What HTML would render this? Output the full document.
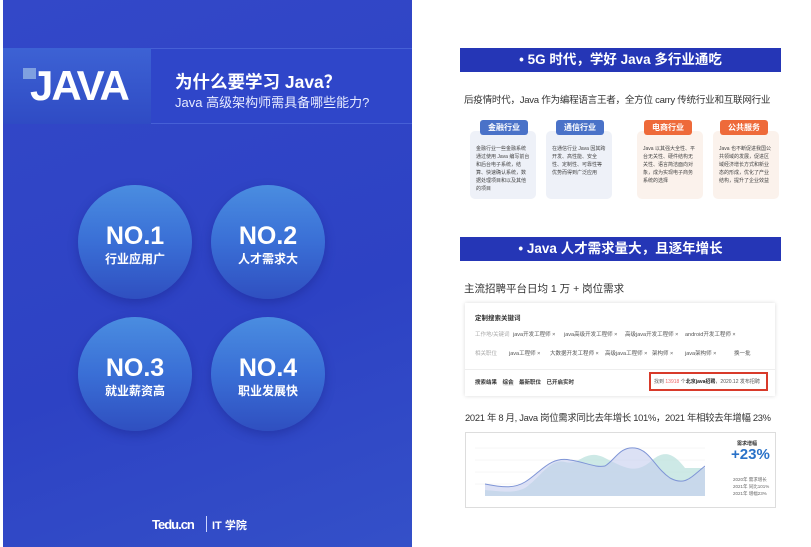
<!DOCTYPE html>
<html><head><meta charset="utf-8"><style>
*{margin:0;padding:0;box-sizing:border-box}
body{width:811px;height:547px;background:#fff;position:relative;overflow:hidden;font-family:"Liberation Sans","Noto Sans CJK SC",sans-serif}
.a{position:absolute;white-space:nowrap}
.left{left:3px;top:0;width:409px;height:547px;background:linear-gradient(160deg,#3348c8 0%,#2d42c4 60%,#3450c8 100%)}
.circ{position:absolute;width:114px;height:114px;border-radius:50%;background:linear-gradient(180deg,#4a8de0 0%,#3a6fd6 50%,#2f4fc0 100%);box-shadow:0 4px 10px rgba(20,30,120,.35);color:#fff;text-align:center}
.circ b{display:block;font-size:25px;margin-top:38px;line-height:26px;font-weight:bold}
.circ span{display:block;font-size:12px;font-weight:bold;margin-top:1px}
.ban{left:460px;width:321px;height:24px;background:#2536b6;color:#fff;font-weight:bold;font-size:13.5px;text-align:center;line-height:24px}
.t{font-size:10.5px;color:#333}
.lab{position:absolute;width:48px;height:15px;border-radius:3px;color:#fff;font-size:8px;font-weight:bold;text-align:center;line-height:15px}
.card{position:absolute;width:66px;height:68px;border-radius:5px;font-size:5px;line-height:8px;color:#444;padding:14px 6px 0}
.tag{position:absolute;font-size:5.5px;color:#555;white-space:nowrap}
</style></head><body>
<div class="a left"></div>
<div class="a" style="left:3px;top:48px;width:409px;height:76px;background:#2f46c9;border-top:1px solid #4660d6;border-bottom:1px solid #4660d6"></div>
<div class="a" style="left:3px;top:48px;width:148px;height:76px;background:linear-gradient(180deg,#3d62d4,#2f4bc4)"></div>
<div class="a" style="left:23px;top:68px;width:13px;height:11px;background:#7fa0e0"></div>
<div class="a" style="left:30px;top:62px;color:#fff;font-size:42px;font-weight:bold;letter-spacing:-2px">JAVA</div>
<div class="a" style="left:175px;top:69px;color:#fff;font-size:17.5px;font-weight:bold">为什么要学习 Java？</div>
<div class="a" style="left:175px;top:92px;color:#e8ecff;font-size:13px">Java 高级架构师需具备哪些能力?</div>
<div class="circ" style="left:78px;top:185px"><b>NO.1</b><span>行业应用广</span></div>
<div class="circ" style="left:211px;top:185px"><b>NO.2</b><span>人才需求大</span></div>
<div class="circ" style="left:78px;top:317px"><b>NO.3</b><span>就业薪资高</span></div>
<div class="circ" style="left:211px;top:317px"><b>NO.4</b><span>职业发展快</span></div>
<div class="a" style="left:152px;top:517px;color:#fff;font-size:13px;font-weight:bold;letter-spacing:-1px">Tedu.cn</div>
<div class="a" style="left:206px;top:516px;width:1px;height:16px;background:#cdd5ff"></div>
<div class="a" style="left:212px;top:517px;color:#fff;font-size:11px;font-weight:bold">IT 学院</div>

<div class="a ban" style="top:48px">• 5G 时代，学好 Java 多行业通吃</div>
<div class="a t" style="left:464px;top:92px;font-size:9.6px;letter-spacing:-.3px">后疫情时代，Java 作为编程语言王者，全方位 carry 传统行业和互联网行业</div>
<div class="card" style="left:470px;top:131px;background:#eef1f8">金融行业一些金融系统通过使用 Java 编写前台和后台电子系统，结算、快速确认系统，数据处理项目和以及其他的项目</div>
<div class="card" style="left:546px;top:131px;background:#eef1f8">在通信行业 Java 因其跨开发、高性能、安全性、定制性、可靠性等优势而得到广泛应用</div>
<div class="card" style="left:637px;top:131px;background:#fbf2ec">Java 以其强大全性、平台无关性、硬件结构无关性、语言简洁面向对象，成为实现电子商务系统的选择</div>
<div class="card" style="left:713px;top:131px;background:#fbf2ec">Java 也不断促进我国公共领域的发展，促进区域经济增长方式和新业态的形成，优化了产业结构，提升了企业效益</div>
<div class="lab" style="left:480px;top:120px;background:#4a72c8">金融行业</div>
<div class="lab" style="left:556px;top:120px;background:#4a72c8">通信行业</div>
<div class="lab" style="left:644px;top:120px;background:#ee6a3a">电商行业</div>
<div class="lab" style="left:720px;top:120px;background:#ee6a3a">公共服务</div>

<div class="a ban" style="top:237px">• Java 人才需求量大，且逐年增长</div>
<div class="a t" style="left:464px;top:281px">主流招聘平台日均 1 万 + 岗位需求</div>
<div class="a" style="left:465px;top:303px;width:310px;height:93px;background:#fff;box-shadow:0 0 4px rgba(0,0,0,.15)"></div>
<div class="a" style="left:475px;top:312px;font-size:6.5px;font-weight:bold;color:#333">定制搜索关键词</div>
<div class="tag" style="left:475px;top:330px;color:#aaa">工作地/关键词</div>
<div class="tag" style="left:513px;top:330px">java开发工程师 ×</div>
<div class="tag" style="left:564px;top:330px">java高级开发工程师 ×</div>
<div class="tag" style="left:625px;top:330px">高级java开发工程师 ×</div>
<div class="tag" style="left:685px;top:330px">android开发工程师 ×</div>
<div class="tag" style="left:475px;top:349px;color:#aaa">相关职位</div>
<div class="tag" style="left:509px;top:349px">java工程师 ×</div>
<div class="tag" style="left:550px;top:349px">大数据开发工程师 ×</div>
<div class="tag" style="left:605px;top:349px">高级java工程师 ×</div>
<div class="tag" style="left:652px;top:349px">架构师 ×</div>
<div class="tag" style="left:685px;top:349px">java架构师 ×</div>
<div class="tag" style="left:734px;top:349px">换一批</div>
<div class="a" style="left:465px;top:369px;width:310px;height:1px;background:#eee"></div>
<div class="tag" style="left:475px;top:378px;font-weight:bold;color:#333">搜索结果　<span style="background:#eee">综合</span>　最新职位　已开启实时</div>
<div class="a" style="left:649px;top:372px;width:119px;height:19px;border:2px solid #d83a2a"></div>
<div class="tag" style="left:654px;top:378px;font-size:5px">找到 <span style="color:#e66">13918</span> 个<b style="color:#222">北京java招聘</b>，2020.12 发布招聘</div>

<div class="a t" style="left:465px;top:410px;font-size:9.4px;letter-spacing:-.3px">2021 年 8 月, Java 岗位需求同比去年增长 101%，2021 年相较去年增幅 23%</div>
<div class="a" style="left:465px;top:432px;width:311px;height:76px;border:1px solid #ddd;background:#fff"></div>
<svg class="a" style="left:475px;top:438px" width="230" height="62">
<g stroke="#eee" stroke-width=".5"><line x1="0" y1="10" x2="230" y2="10"/><line x1="0" y1="22" x2="230" y2="22"/><line x1="0" y1="34" x2="230" y2="34"/><line x1="0" y1="46" x2="230" y2="46"/></g>
<path d="M10 52 C30 54 40 55 50 50 C65 40 75 20 90 24 C105 28 110 10 130 20 C150 30 160 36 175 24 C185 15 195 10 210 30 L230 30 L230 58 L10 58Z" fill="#b8e0dc" opacity=".7"/>
<path d="M10 46 C30 50 40 50 50 44 C65 35 75 18 95 22 C110 24 120 30 130 28 C140 22 145 8 160 10 C175 12 180 30 195 40 C210 48 215 40 230 28 L230 58 L10 58Z" fill="#c5cdee" opacity=".6"/>
<path d="M10 46 C30 50 40 50 50 44 C65 35 75 18 95 22 C110 24 120 30 130 28 C140 22 145 8 160 10 C175 12 180 30 195 40 C210 48 215 40 230 28" stroke="#7f95d6" fill="none"/>
</svg>
<div class="a" style="left:737px;top:440px;font-size:5px;color:#333;font-weight:bold">需求增幅</div>
<div class="a" style="left:731px;top:446px;font-size:15px;color:#2a72c8;font-weight:bold">+23%</div>
<div class="a" style="left:733px;top:476px;font-size:4.5px;color:#666;line-height:7px">2020年 需求增长<br>2021年 同比101%<br>2021年 增幅23%</div>
</body></html>
